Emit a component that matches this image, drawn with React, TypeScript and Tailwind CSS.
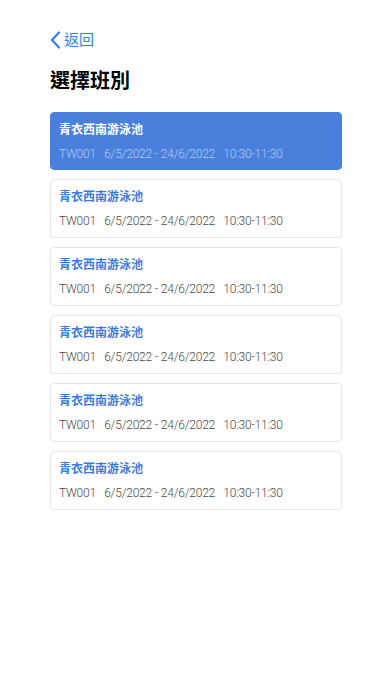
const font = {
  fontFamily: 'Inter, "Noto Sans CJK TC", sans-serif',
};

const classes = Array.from({ length: 6 }).map((_, i) => ({
  id: i,
  name: "青衣西南游泳池",
  code: "TW001",
  dates: "6/5/2022 - 24/6/2022",
  time: "10:30-11:30",
}));

export default function App() {
  return (
    <div className="min-h-[696px] w-full bg-white px-[50px] pt-[31px]" style={font}>
      {/* Back button */}
      <button className="flex items-center gap-[3px] text-[#2f7ef5]">
        <svg width="11" height="18" viewBox="0 0 11 18" fill="none">
          <path d="M9 1.5L2 9l7 7.5" stroke="currentColor" strokeWidth="2.2" strokeLinecap="round" strokeLinejoin="round" />
        </svg>
        <span className="text-[15px] leading-[18px]">返回</span>
      </button>

      <h1 className="mt-[20px] text-[20px] font-bold leading-[24px] text-black">選擇班別</h1>

      <div className="mt-[19px] flex flex-col gap-[9px]">
        {classes.map((c) => {
          const active = c.id === 0;
          return (
            <div
              key={c.id}
              className={
                active
                  ? "h-[58px] rounded-[4px] border border-[#4a80dc] bg-[#4a80dc] px-[8px] pt-[7px]"
                  : "h-[59px] rounded-[4px] border border-[#e6e6e6] bg-white px-[8px] pt-[7px]"
              }
            >
              <div
                className={
                  active
                    ? "text-[12px] font-bold leading-[20px] text-white"
                    : "text-[12px] font-bold leading-[20px] text-[#3d7bd9]"
                }
              >
                {c.name}
              </div>
              <div
                className={
                  active
                    ? "mt-[4px] whitespace-pre font-['Roboto'] text-[12px] font-light leading-[20px] tracking-[-0.2px] text-[#b3cbf2]"
                    : "mt-[4px] whitespace-pre font-['Roboto'] text-[12px] font-light leading-[20px] tracking-[-0.2px] text-[#4a4a4a]"
                }
              >
                {`${c.code}   ${c.dates}   ${c.time}`}
              </div>
            </div>
          );
        })}
      </div>
    </div>
  );
}
